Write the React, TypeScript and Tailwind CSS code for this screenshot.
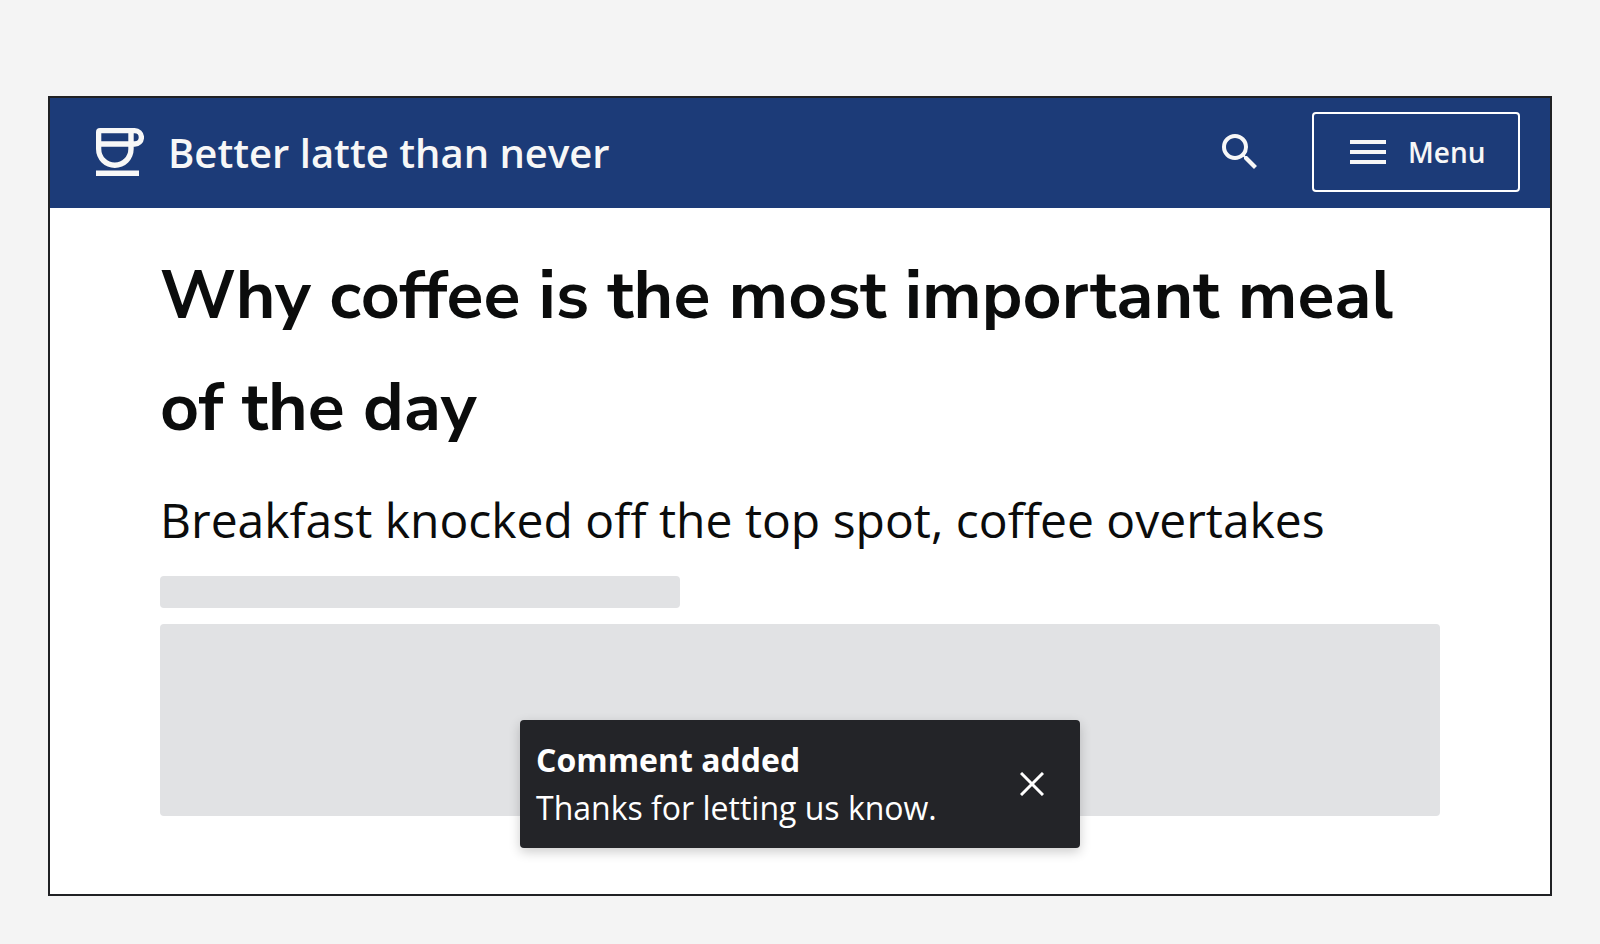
import { MdMenu, MdSearch } from "react-icons/md";

function CupIcon() {
  return (
    <svg viewBox="0 0 48 48" className="size-12 shrink-0 fill-current" aria-hidden="true">
      <path
        fillRule="evenodd"
        d="M4 0H38.7A9.35 9.35 0 0 1 38.7 18.7H37.7V21A18.85 19 0 0 1 0 21V4A4 4 0 0 1 4 0ZM5.3 5.3V13.3H32.3V5.3ZM5.3 18.7V21A13.5 13.6 0 0 0 32.3 21V18.7ZM37.7 5.3V13.3H38.7A4 4 0 0 0 38.7 5.3Z"
      />
      <path d="M0 42.4H43V48H0Z" />
    </svg>
  );
}

function Header() {
  return (
    <header className="flex items-center justify-between bg-[#1c3b78] pt-3.5 pr-[30px] pb-4 pl-[46px] text-[#f7f7f7]">
      <a href="#" className="flex items-center gap-6">
        <CupIcon />
        <span className="pt-0.5 text-[40px] leading-[56px] font-semibold">Better latte than never</span>
      </a>
      <div className="flex items-center gap-12">
        <button type="button" aria-label="Search">
          <MdSearch className="size-12" />
        </button>
        <button
          type="button"
          className="flex h-20 w-52 items-center gap-4 rounded-[4px] border-2 border-white px-[30px] text-[28px] font-semibold"
        >
          <MdMenu className="size-12 shrink-0" />
          Menu
        </button>
      </div>
    </header>
  );
}

function Toast() {
  return (
    <div
      role="status"
      className="absolute bottom-[46px] left-1/2 flex w-[560px] -translate-x-1/2 items-center justify-between rounded-[4px] bg-[#232428] py-4 pr-8 pl-4 text-white shadow-[0_4px_12px_rgba(0,0,0,0.2)]"
    >
      <div className="text-[32px] leading-[48px]">
        <p className="font-bold">Comment added</p>
        <p>Thanks for letting us know.</p>
      </div>
      <button type="button" aria-label="Dismiss" className="p-1">
        <svg viewBox="0 0 24 24" className="size-6" fill="none" stroke="currentColor" strokeWidth="3" aria-hidden="true">
          <path d="M1 1L23 23M23 1L1 23" />
        </svg>
      </button>
    </div>
  );
}

export default function App() {
  return (
    <div className="min-h-screen bg-[#f4f4f4] px-12 pt-24 pb-12 font-['Open_Sans','Noto_Sans',sans-serif]">
      <div className="relative border-2 border-[#202124] bg-white">
        <Header />
        <main className="px-[110px] pt-8 pb-[78px] text-[#0b0c0c]">
          <h1 className="font-['Nunito_Sans','Lato',sans-serif] text-[68px] leading-[112px] font-bold">
            Why coffee is the most important meal of the day
          </h1>
          <p className="mt-5 text-[48px] leading-[72px]">
            Breakfast knocked off the top spot, coffee overtakes
          </p>
          <div className="mt-5 h-8 w-[520px] rounded-[4px] bg-[#e1e2e4]" />
          <div className="mt-4 h-48 rounded-[4px] bg-[#e1e2e4]" />
        </main>
        <Toast />
      </div>
    </div>
  );
}
